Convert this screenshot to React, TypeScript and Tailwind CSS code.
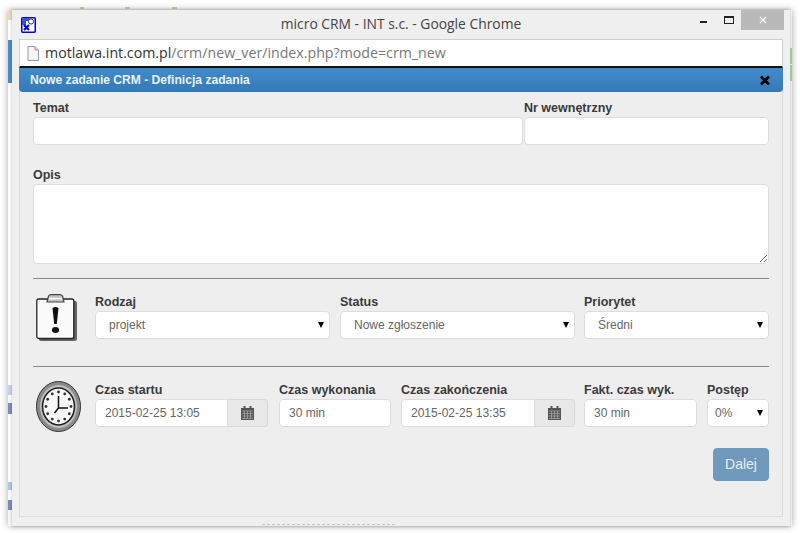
const sans = 'font-["Liberation_Sans",Arial,sans-serif]'

function Caret() {
  return <span className="pointer-events-none absolute right-[6px] top-[11px] h-0 w-0 border-x-[3.5px] border-t-[6px] border-x-transparent border-t-black" />
}

function Field({ label, className, children }: { label: string; className: string; children: React.ReactNode }) {
  return (
    <div className={className}>
      <div className="h-[17px] text-[12.5px] font-bold leading-[17px] text-[#3a3a3a] whitespace-nowrap">{label}</div>
      {children}
    </div>
  )
}

function Select({ value, pad = 'pl-[13px]' }: { value: string; pad?: string }) {
  return (
    <div className="relative">
      <select defaultValue={value} className={`h-[28px] w-full appearance-none rounded-[4px] border border-[#ddd] bg-white text-[12px] text-[#666] outline-none ${pad}`}>
        <option>{value}</option>
      </select>
      <Caret />
    </div>
  )
}

function TextInput({ value = '', className = 'w-full' }: { value?: string; className?: string }) {
  return (
    <input readOnly value={value} className={`h-[28px] rounded-[4px] border border-[#ddd] bg-white px-[9px] text-[12px] text-[#666] outline-none ${className}`} />
  )
}

function CalendarIcon() {
  return (
    <svg width="13" height="14" viewBox="0 0 13 14">
      <rect x="0" y="2" width="13" height="12" fill="#555" />
      <rect x="2.5" y="0" width="2" height="3.5" fill="#555" />
      <rect x="8.5" y="0" width="2" height="3.5" fill="#555" />
      <path d="M1 5h11M1 7.5h11M1 10h11M1 12.5h11" stroke="#aaa" strokeWidth="0.7" />
      <path d="M3.5 5v8M6.5 5v8M9.5 5v8" stroke="#aaa" strokeWidth="0.7" />
    </svg>
  )
}

function DateInput({ value }: { value: string }) {
  return (
    <div className="flex h-[28px]">
      <input readOnly value={value} className="w-full min-w-0 rounded-l-[4px] border border-[#ddd] bg-white px-[9px] text-[12px] text-[#666] outline-none" />
      <div className="flex w-[40px] shrink-0 items-center justify-center rounded-r-[4px] border border-l-0 border-[#d8d8d8] bg-[#e8e8e8]">
        <CalendarIcon />
      </div>
    </div>
  )
}

function ClipboardIcon() {
  return (
    <svg width="41" height="47" viewBox="0 0 41 47" className="shrink-0">
      <rect x="3" y="7" width="38" height="40" rx="2" fill="#666" />
      <rect x="0.8" y="5" width="37" height="39.5" rx="2" fill="#fbfbfb" stroke="#222" strokeWidth="1.3" />
      <path d="M11 8 L12.5 2 Q13.5 0.7 15 0.7 H24 Q25.5 0.7 26.5 2 L28 8 Z" fill="#c4c4c4" stroke="#444" strokeWidth="1.2" />
      <path d="M13 4.6h13" stroke="#fff" strokeWidth="1.4" />
      <path d="M16.5 14 Q19.5 12 22.5 14 L20.8 30 H18.2 Z" fill="#111" />
      <ellipse cx="19.5" cy="36" rx="3.6" ry="3" fill="#111" />
    </svg>
  )
}

function ClockIcon() {
  const dots = Array.from({ length: 12 }, (_, i) => {
    const a = (i * Math.PI) / 6
    return <circle key={i} cx={22.5 + 12.5 * Math.sin(a)} cy={25.5 - 14.5 * Math.cos(a)} r="1.4" fill="#333" />
  })
  return (
    <svg width="45" height="51" viewBox="0 0 45 51" className="shrink-0">
      <ellipse cx="22.5" cy="25.5" rx="22" ry="25" fill="#8a8a8a" stroke="#333" strokeWidth="1" />
      <ellipse cx="22.5" cy="25.5" rx="19" ry="22" fill="#c0c0c0" stroke="#888" strokeWidth="1" />
      <ellipse cx="22.5" cy="25.5" rx="16" ry="18.5" fill="#f7f7f7" stroke="#222" strokeWidth="1.6" />
      {dots}
      <path d="M22.5 27V15M22.5 27H32M22.5 27l-4 5" stroke="#111" strokeWidth="1.5" fill="none" />
    </svg>
  )
}

function Favicon() {
  return (
    <svg width="15" height="16" viewBox="0 0 15 16" className="shrink-0">
      <rect x="0.75" y="0.75" width="13.5" height="14.5" rx="1" fill="#fff" stroke="#0000e0" strokeWidth="1.5" />
      <path d="M1 1h7v3H5v4H1Z" fill="#3550e8" />
      <circle cx="10" cy="4.5" r="2.6" fill="#fff" stroke="#333" strokeWidth="1" />
      <path d="M3 8l5 5M3 13l5-5" stroke="#0000e0" strokeWidth="2.2" />
    </svg>
  )
}

function FileIcon() {
  return (
    <svg width="12" height="15" viewBox="0 0 12 15" className="shrink-0">
      <path d="M1 .5h7l3.5 3.5v10.5H1Z" fill="#f6f6f6" stroke="#999" />
      <path d="M8 .5V4h3.5" fill="#ddd" stroke="#999" />
    </svg>
  )
}

export default function App() {
  return (
    <div className={`h-[533px] w-[800px] overflow-hidden bg-white pl-[8px] ${sans}`}>
      {/* flecks of the page behind, above the shadow */}
      <div className="flex h-[10px] items-end pb-[1px] pl-[72px]">
        <div className="h-[2px] w-[4px] bg-[#cdbb9f]" />
        <div className="ml-[41px] h-[2px] w-[5px] bg-[#cdbb9f]" />
        <div className="ml-[42px] h-[2px] w-[5px] bg-[#cdbb9f]" />
      </div>

      <div className="flex h-[516px] w-[784px] bg-[#f7f7f7] shadow-[0_0_7px_rgba(0,0,0,0.35)]">
        {/* strip of the page behind the popup */}
        <div className="flex w-[4px] shrink-0 flex-col">
          <div className="h-[10px] bg-[#eed9b8]" />
          <div className="h-[20px] bg-white" />
          <div className="h-[43px] bg-[#4a8cc8]" />
          <div className="h-[302px] bg-white" />
          <div className="h-[10px] bg-[#c8d4ee]" />
          <div className="h-[8px] bg-white" />
          <div className="h-[11px] bg-[#7c8cc0]" />
          <div className="h-[68px] bg-white" />
          <div className="h-[8px] bg-[#a8c8ee]" />
          <div className="h-[10px] bg-white" />
          <div className="h-[10px] bg-[#7c8cc0]" />
        </div>

        <div className="flex h-[516px] w-[778px] shrink-0 flex-col bg-[#efefef] shadow-[0_0_3px_rgba(0,0,0,0.25)]">
          <div className="relative flex h-[29px] shrink-0 items-center justify-center">
            <div className="absolute left-[9px] top-[7px]"><Favicon /></div>
            <span className='font-["Open_Sans",sans-serif] text-[13.85px] text-[#444]'>micro CRM - INT s.c. - Google Chrome</span>
            <span className="absolute left-[688px] top-[11px] h-[2px] w-[7px] bg-[#222]" />
            <span className="absolute left-[712px] top-[6px] h-[8px] w-[10px] border border-t-2 border-[#222]" />
            <div className="absolute right-[6px] top-0 flex h-[20px] w-[43px] items-center justify-center bg-[#b9b9b9]">
              <svg width="8" height="8" viewBox="0 0 8 8"><path d="M1 1l6 6M7 1l-6 6" stroke="#fff" strokeWidth="1.3" /></svg>
            </div>
          </div>

          <div className="mx-[7px] flex h-[29px] shrink-0 items-center gap-[6px] border border-b-2 border-[#d0d0d0] border-b-[#111] bg-white pl-[7px]">
            <FileIcon />
            <span className='font-["Open_Sans",sans-serif] text-[14.2px] text-[#777]'>
              <span className="text-[#333]">motlawa.int.com.pl</span>/crm/new_ver/index.php?mode=crm_new
            </span>
          </div>

          <div className="mx-[7px] flex min-h-0 flex-1 flex-col border-x border-b border-[#dcdcdc] bg-[#eeeeee]">
            <div className="-mx-px flex h-[24px] shrink-0 items-center justify-between rounded-b-[4px] bg-gradient-to-b from-[#428bca] to-[#337ab7] pl-[11px] pr-[12px]">
              <span className="text-[12.1px] font-bold text-[#eaf2fa]">Nowe zadanie CRM - Definicja zadania</span>
              <svg width="12" height="11" viewBox="0 0 12 11"><path d="M2 1.5l8 8M10 1.5l-8 8" stroke="#000" strokeWidth="2.8" /></svg>
            </div>

            <div className="flex flex-col pl-[13px] pt-[8px]">
              <div className="flex w-[736px]">
                <Field label="Temat" className="w-[490px]"><TextInput /></Field>
                <Field label="Nr wewnętrzny" className="ml-px w-[245px]"><TextInput /></Field>
              </div>

              <Field label="Opis" className="mt-[22px] w-[736px]">
                <textarea readOnly className="block h-[80px] w-full rounded-[4px] border border-[#ddd] bg-white outline-none" />
              </Field>

              <div className="mt-[14px] h-px w-[736px] bg-[#888]" />

              <div className="mt-[15px] flex h-[45px] w-[736px] items-start">
                <div className="flex w-[62px] shrink-0 pl-[3px]"><ClipboardIcon /></div>
                <Field label="Rodzaj" className="w-[235px]"><Select value="projekt" /></Field>
                <Field label="Status" className="ml-[10px] w-[235px]"><Select value="Nowe zgłoszenie" /></Field>
                <Field label="Priorytet" className="ml-[9px] w-[185px]"><Select value="Średni" /></Field>
              </div>

              <div className="mt-[27px] h-px w-[736px] bg-[#888]" />

              <div className="mt-[15px] flex h-[45px] w-[736px] items-start">
                <div className="-mt-px flex w-[62px] shrink-0 pl-[3px]"><ClockIcon /></div>
                <Field label="Czas startu" className="w-[173px]"><DateInput value="2015-02-25 13:05" /></Field>
                <Field label="Czas wykonania" className="ml-[11px] w-[112px]"><TextInput value="30 min" /></Field>
                <Field label="Czas zakończenia" className="ml-[10px] w-[174px]"><DateInput value="2015-02-25 13:35" /></Field>
                <Field label="Fakt. czas wyk." className="ml-[9px] w-[113px]"><TextInput value="30 min" /></Field>
                <Field label="Postęp" className="ml-[10px] w-[62px]"><Select value="0%" pad="pl-[7px]" /></Field>
              </div>

              <div className="mt-[21px] flex w-[736px] justify-end">
                <button className="h-[33px] w-[56px] rounded-[4px] border border-[#6b9ac0] bg-[#7099bd] text-[14px] text-[#e6edf4]">Dalej</button>
              </div>
            </div>
          </div>
          <div className="h-[9px] shrink-0 pt-[7px]">
            <div className="ml-[250px] w-[133px] border-t border-dashed border-[#c4c4c4]" />
          </div>
        </div>

        <div className="flex w-[2px] shrink-0 flex-col">
          <div className="h-[38px]" />
          <div className="h-[16px] bg-[#9cc89c]" />
          <div className="h-px" />
          <div className="h-[16px] bg-[#9cc89c]" />
        </div>
      </div>
    </div>
  )
}
